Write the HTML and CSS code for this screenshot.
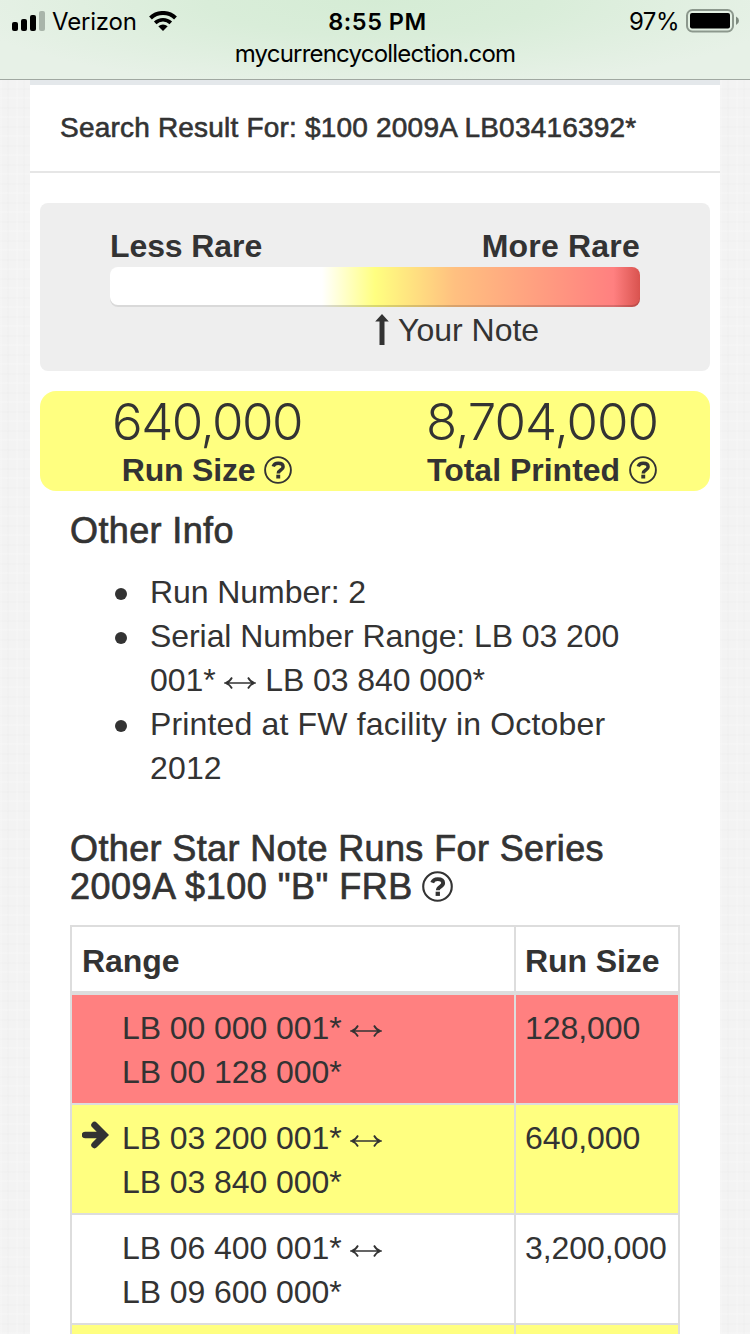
FILE: index.html
```html
<!DOCTYPE html>
<html lang="en">
<head>
<meta charset="utf-8">
<title>My Currency Collection</title>
<link rel="stylesheet" href="styles.css">
</head>
<body>
<svg width="0" height="0" class="defs">
  <symbol id="help" viewBox="0 0 28 28">
    <circle cx="14" cy="14" r="12.9" fill="none" stroke="currentColor" stroke-width="1.900"/>
    <path d="M9.200 10.500C10 8.300 11.700 7.300 14.200 7.300c2.900 0 4.900 1.300 4.900 3.600 0 3.300-4.800 3-4.800 6.500" fill="none" stroke="currentColor" stroke-width="3.500"/>
    <rect x="12.300" y="18.700" width="3.900" height="3.800" fill="currentColor"/>
  </symbol>
  <symbol id="range" viewBox="0 0 32 20">
    <path d="M2 10H30M8 4.500Q6 8.500 1.500 10Q6 11.500 8 15.500M24 4.500Q26 8.500 30.500 10Q26 11.500 24 15.500" fill="none" stroke="currentColor" stroke-width="1.700"/>
  </symbol>
</svg>
<header class="browser">
  <div class="status">
    <div class="side">
      <svg class="signal" width="34" height="20" viewBox="0 0 34 20"><rect x="0" y="11" width="6" height="9" rx="2"/><rect x="9" y="8" width="6" height="12" rx="2"/><rect x="18" y="4" width="6" height="16" rx="2"/><rect x="27" y="0" width="6" height="20" rx="2" fill="#a9b5aa"/></svg>
      <span class="carrier">Verizon</span>
      <svg class="wifi" width="28" height="20" viewBox="0 0 28 20"><path d="M1.500 7A18 18 0 0 1 26.500 7" fill="none" stroke="#000" stroke-width="4"/><path d="M6.200 11.800A11.500 11.500 0 0 1 21.800 11.800" fill="none" stroke="#000" stroke-width="3.700"/><path d="M9.300 15.200Q14 11.600 18.700 15.200L14 20Z"/></svg>
    </div>
    <span class="time">8:55 PM</span>
    <div class="side right">
      <span class="percent">97%</span>
      <svg class="battery" width="53" height="24" viewBox="0 0 53 24"><rect x="1" y="1" width="46" height="21.500" rx="5.500" fill="none" stroke="#8c988d" stroke-width="2"/><rect x="4" y="4" width="40" height="15.500" rx="2"/><path d="M50 7.500Q53 9 53 11.700T50 16Z" fill="#7d897e"/></svg>
    </div>
  </div>
  <div class="url">mycurrencycollection.com</div>
</header>
<main class="page">
  <h1 class="result">Search Result For: $100 2009A LB03416392*</h1>
  <section class="rarity">
    <div class="labels"><b>Less Rare</b><b class="more">More Rare</b></div>
    <div class="scale"></div>
    <div class="note"><svg width="14" height="32" viewBox="0 0 14 32"><path d="M7 0L13.800 7.500H9.500V31H4.500V7.500H.2Z"/></svg><span>Your Note</span></div>
  </section>
  <section class="totals">
    <div class="total run"><span class="number">640,000</span><span class="caption"><span>Run Size</span><svg class="help"><use href="#help"/></svg></span></div>
    <div class="total"><span class="number">8,704,000</span><span class="caption"><span>Total Printed</span><svg class="help"><use href="#help"/></svg></span></div>
  </section>
  <section class="info">
    <h2 class="heading">Other Info</h2>
    <ul class="facts">
      <li>Run Number: 2</li>
      <li>Serial Number Range: LB 03 200<br>001* <svg class="arrow"><use href="#range"/></svg> LB 03 840 000*</li>
      <li class="printed">Printed at FW facility in October<br>2012</li>
    </ul>
    <h2 class="heading">Other Star Note Runs For Series<br><span class="frb">2009A $100 "B" FRB</span> <svg class="help big"><use href="#help"/></svg></h2>
    <div class="table">
      <div class="row head"><div class="cell">Range</div><div class="cell">Run Size</div></div>
      <div class="row red"><div class="cell range">LB 00 000 001* <svg class="arrow"><use href="#range"/></svg><br>LB 00 128 000*</div><div class="cell">128,000</div></div>
      <div class="row yellow"><div class="cell range"><svg class="pointer" width="27" height="28" viewBox="0 0 27 28"><path d="M3 14H21M12.500 4L22.500 14L12.500 24" fill="none" stroke="#333" stroke-width="6.500" stroke-linecap="round" stroke-linejoin="miter"/></svg>LB 03 200 001* <svg class="arrow"><use href="#range"/></svg><br>LB 03 840 000*</div><div class="cell">640,000</div></div>
      <div class="row"><div class="cell range">LB 06 400 001* <svg class="arrow"><use href="#range"/></svg><br>LB 09 600 000*</div><div class="cell">3,200,000</div></div>
      <div class="row yellow"><div class="cell range"></div><div class="cell"></div></div>
    </div>
  </section>
</main>
</body>
</html>
```
FILE: styles.css
```css
* { box-sizing: border-box; }
body {
  margin: 0;
  height: 1334px;
  overflow: hidden;
  color: #333;
  font: 32px/44px "Liberation Sans", Arial, sans-serif;
  background:
    repeating-linear-gradient(90deg, rgba(255,255,255,.15) 0 2px, transparent 2px 7px, rgba(0,0,0,.007) 7px 9px, transparent 9px 16px),
    repeating-linear-gradient(0deg, rgba(255,255,255,.15) 0 2px, transparent 2px 9px, rgba(0,0,0,.007) 9px 11px, transparent 11px 19px),
    #f3f3f3;
}
.defs { position: absolute; }
span { white-space: nowrap; }
.browser {
  height: 80px;
  border-bottom: 1px solid #a0a8a1;
  color: #000;
  font-family: Inter, sans-serif;
  background: radial-gradient(ellipse 420px 90px at 50% 0, #d5ecd5 0%, #d9edd9 40%, #e7f1e7 100%);
}
.status { display: grid; grid-template-columns: 1fr auto 1fr; height: 40px; padding: 0 11px 0 12px; align-items: center; }
.side { display: flex; align-items: center; height: 40px; }
.right { justify-content: flex-end; }
.carrier, .percent, .time { padding-top: 2px; line-height: 40px; font-size: 24px; }
.carrier { margin-left: 6px; letter-spacing: -.2px; }
.wifi { margin-left: 12px; }
.time { padding-left: 4px; font-size: 23.500px; font-weight: 600; letter-spacing: .5px; }
.percent { margin-right: 7px; letter-spacing: -.5px; }
.url { text-align: center; font-size: 24px; line-height: 28px; letter-spacing: -.8px; }
.page { width: 690px; height: 1254px; margin: 0 auto; background: #fff; border-top: 5px solid #e4e8eb; overflow: hidden; }
.result { margin: 0; height: 88px; padding: 21px 30px 0; border-bottom: 2px solid #e6e6e6; font-size: 28px; font-weight: 400; letter-spacing: .2px; -webkit-text-stroke: .6px #333; }
.rarity { margin: 30px 10px 0; height: 168px; padding: 21px 70px 0; border-radius: 8px; background: #eee; }
.labels { display: flex; justify-content: space-between; height: 43px; letter-spacing: -.1px; }
.more { letter-spacing: .2px; }
.scale {
  height: 40px;
  border-radius: 8px;
  box-shadow: inset 0 -2px rgba(0,0,0,.15);
  background: linear-gradient(90deg, #fff 40%, #ffff80 50%, #ffc080 65%, #ff8080 95%, #d9534f 100%);
}
.note { display: flex; align-items: center; gap: 9px; height: 46px; padding-left: 265px; fill: #333; }
.totals { display: flex; justify-content: space-between; margin: 20px 10px 0; height: 100px; padding: 8px 52px 0 72px; border-radius: 16px; background: #ffff80; }
.total { display: flex; flex-direction: column; align-items: center; }
.number { font: 300 51px/46px Inter, sans-serif; letter-spacing: -1px; }
.run .number { letter-spacing: -1.500px; }
.caption { display: flex; align-items: center; gap: 9px; height: 50px; padding-top: 3px; font-weight: 700; }
.run .caption { letter-spacing: -.2px; }
.help { width: 28px; height: 28px; }
.info { padding: 21px 40px 0; }
.heading { margin: 0; font-size: 36px; line-height: 38px; font-weight: 400; letter-spacing: .38px; -webkit-text-stroke: .7px #333; }
.facts { margin: 20px 0 40px; padding: 0 0 0 80px; list-style: none; letter-spacing: -.07px; }
.printed { letter-spacing: .16px; }
.facts li::before { content: ""; float: left; width: 12px; height: 12px; margin: 18px 0 0 -35px; border-radius: 50%; background: #333; }
.arrow { width: 32px; height: 20px; vertical-align: -2px; }
.frb { letter-spacing: .5px; }
.big { width: 31px; height: 31px; margin-left: -1px; vertical-align: -3px; }
.table { margin-top: 19px; border: 2px solid #ddd; border-bottom: 0; }
.row { display: grid; grid-template-columns: 442px 1fr; height: 110px; border-bottom: 2px solid #ddd; }
.cell { padding: 11px 0 0 10px; white-space: nowrap; letter-spacing: -.08px; }
.cell + .cell { padding-left: 9px; border-left: 2px solid #ddd; }
.head { height: 68px; border-bottom-width: 4px; font-weight: 700; }
.head .cell { padding-top: 12px; }
.cell.range { position: relative; padding-left: 50px; }
.pointer { position: absolute; left: 10px; top: 16px; }
.red { background: #ff8080; }
.yellow { background: #ffff80; }
```
